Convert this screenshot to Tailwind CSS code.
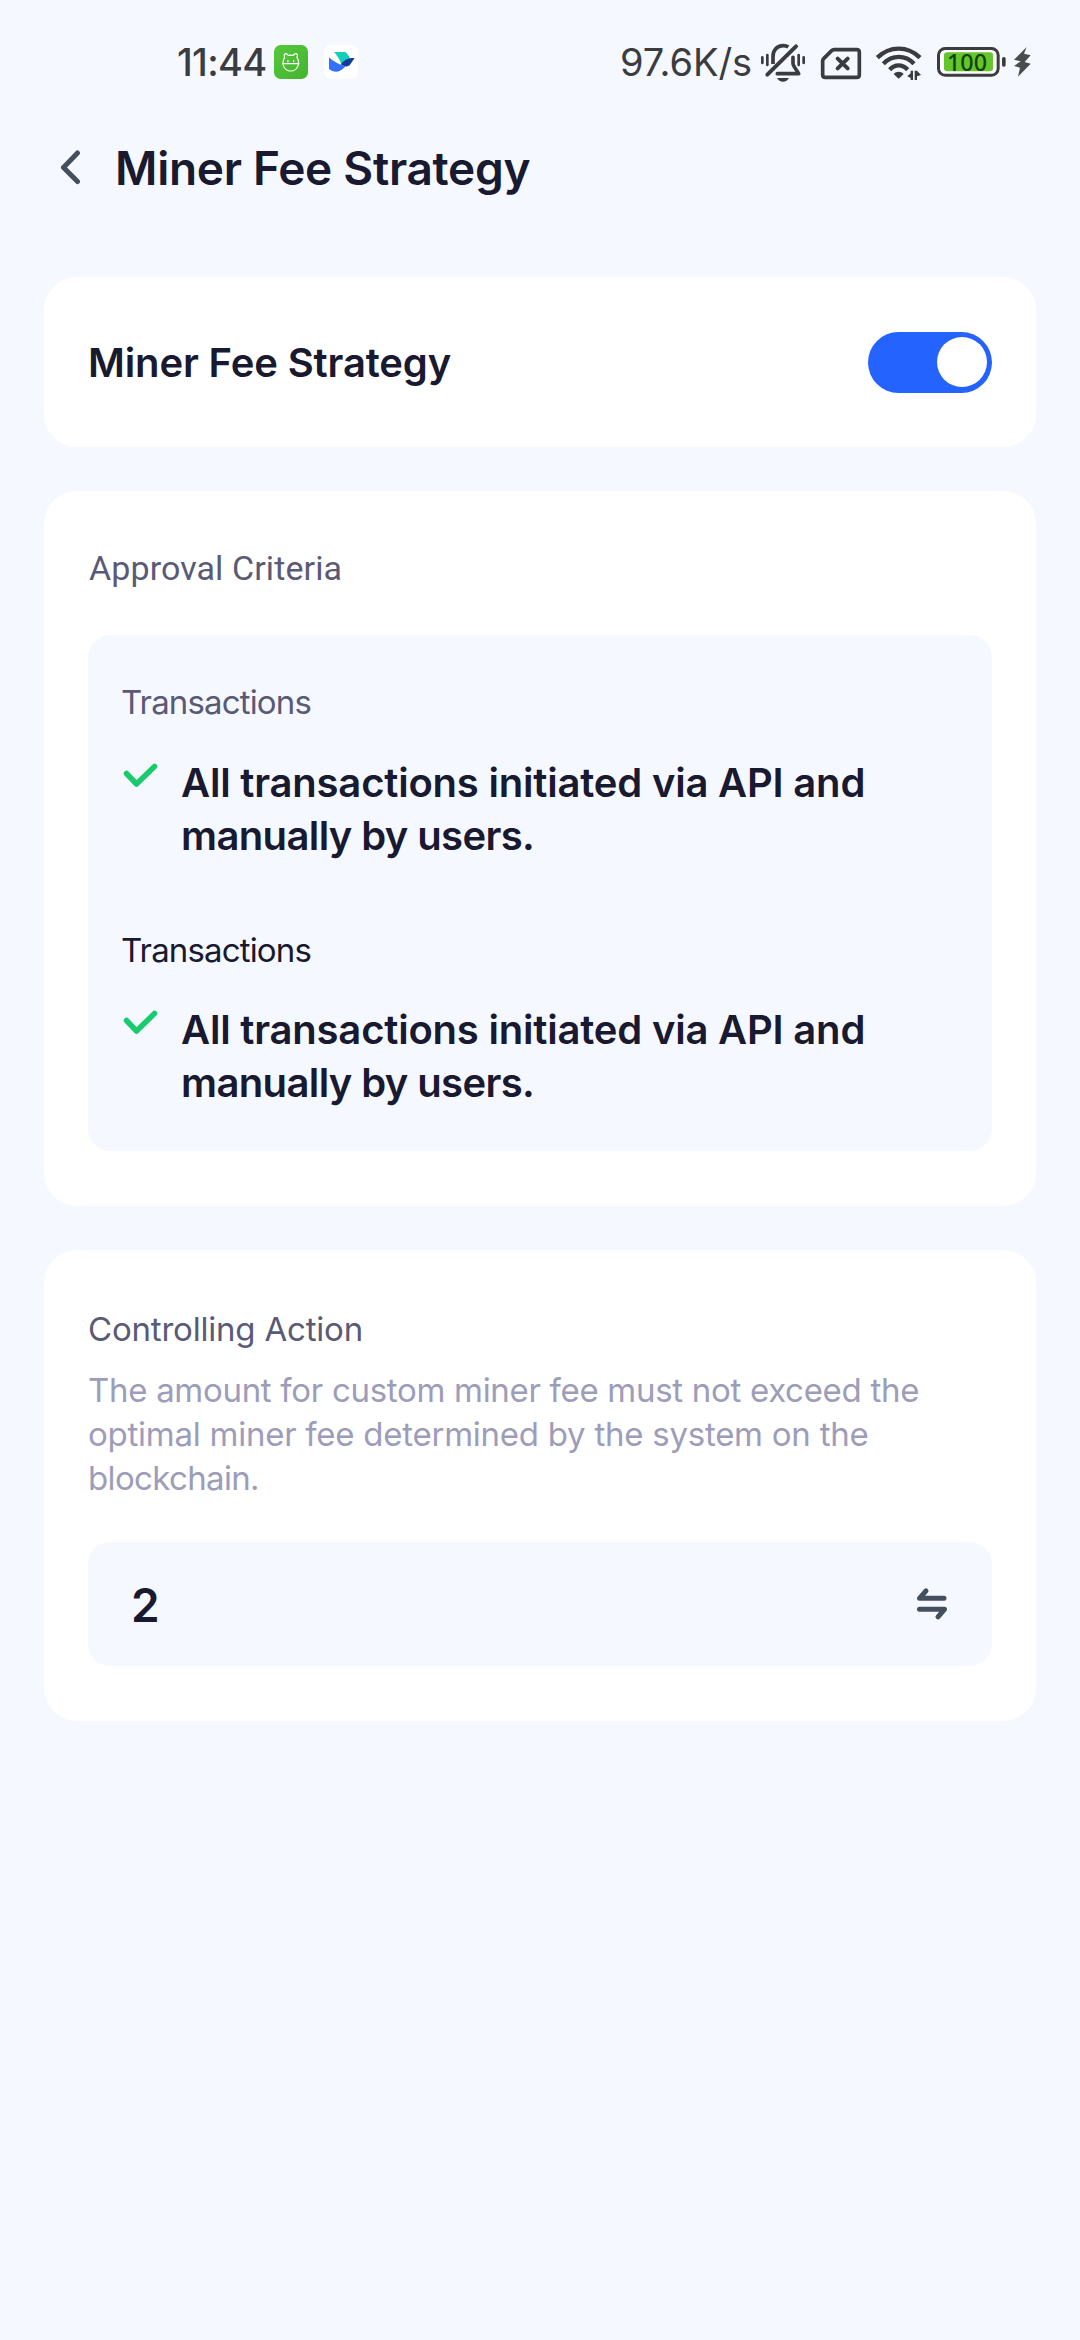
<!DOCTYPE html>
<html lang="en">
<head>
<meta charset="utf-8">
<meta name="viewport" content="width=device-width, initial-scale=1">
<title>Miner Fee Strategy</title>
<script src="https://cdn.jsdelivr.net/npm/@tailwindcss/browser@4"></script>
</head>
<body class="h-[2340px] w-[1080px] overflow-hidden bg-[#f5f8ff] font-['Inter',sans-serif] text-[#19192f]">

<!-- Status bar -->
<div class="flex h-[124px] items-center text-[38px] leading-10 whitespace-nowrap text-[#3b3c3f]">
  <div class="ml-[177px] w-[97px] font-medium tracking-[-0.700px]">11:44</div>
  <svg class="h-[34px] w-[34px]" viewBox="342 45 102 102" fill="none">
    <defs><linearGradient id="g" x1="0" y1="0" x2="1" y2="1"><stop stop-color="#54c93d"/><stop offset="1" stop-color="#45b32d"/></linearGradient></defs>
    <rect x="342" y="45" width="102" height="102" rx="20" fill="url(#g)"/>
    <g stroke="#fff" stroke-width="3.500" stroke-linecap="round" stroke-linejoin="round">
      <path d="M374 82c-3-5-1-12 5-11 4 1 3 5 7 5 4-1 9-1 13 0 3 0 3-4 7-5 6-1 8 6 5 11"/>
      <path d="M374 82c-9 14-6 41 18 41s28-27 19-41"/>
      <path d="M368 101h49"/>
      <path d="M384 91v4M401 91v4"/>
    </g>
  </svg>
  <svg class="ml-4 h-[34px] w-[34px]" viewBox="492 45 102 102">
    <rect x="492" y="45" width="102" height="102" rx="20" fill="#fff"/>
    <path d="M522 66h34c7 6 12 14 14 20-9 2-17 9-25 18-6-15-13-27-23-38Z" fill="#12cfb8"/>
    <path d="M507 82c15 14 33 24 50 26-8 10-17 17-28 17-9 0-16-3-22-8Z" fill="#3370ff"/>
    <path d="M584 85c-18-4-30 3-42 18 8 5 15 7 21 6 9-2 12-15 21-24Z" fill="#123c9c"/>
  </svg>
  <div class="ml-[262px] w-[140px] tracking-[-0.050px]">97.6K/s</div>
  <svg class="h-10 w-[47px]" viewBox="450 36 141 120" fill="none" stroke="#3b3c3f" stroke-linecap="round" stroke-linejoin="round">
    <path d="M472 134 558 49" stroke-width="12"/>
    <path d="M489 102V80c0-19 12-33 30-33 6 0 12 1 16 4" stroke-width="11" stroke-linecap="butt"/>
    <path d="M549 82v18c0 10 12 20 17 31h-64" stroke-width="11"/>
    <path d="M501 144h36c-4 7-10 11-18 11s-14-4-18-11Z" fill="#3b3c3f" stroke="none"/>
    <path d="M457 82v17M472 75v30M566 75v30M581 82v17" stroke-width="8"/>
  </svg>
  <svg class="ml-[13px] h-10 w-[42px]" viewBox="30 36 126 120" fill="none" stroke="#3b3c3f" stroke-linecap="round" stroke-linejoin="round">
    <path d="M72 59h68q8 0 8 8v67q0 8-8 8H46q-8 0-8-8V93q0-4 3-7l24-24q3-3 7-3Z" stroke-width="11"/>
    <path d="m83 86 30 29M113 86l-30 29" stroke-width="12"/>
  </svg>
  <svg class="ml-[13px] h-10 w-[47px]" viewBox="195 36 141 120" fill="none" stroke="#3b3c3f" stroke-width="13">
    <path d="M202 83c37-36 91-36 128 0M220 101c27-27 66-27 92 0M239 119c16-17 38-17 54 0"/>
    <path d="M251 132c8-9 22-9 30 0l-13 13q-2 2-4 0Z" fill="#3b3c3f" stroke="none"/>
    <path d="M292 139l10-9v-8h7v28h-7v-6ZM314 150v-28h7l12 13-12 4v11Z" fill="#3b3c3f" stroke="none"/>
  </svg>
  <svg class="ml-[14px] h-10 w-[71px]" viewBox="378 36 213 120" fill="none">
    <rect x="385.500" y="55.500" width="179" height="80" rx="20" fill="#fff" stroke="#3b3c3f" stroke-width="9"/>
    <rect x="402" y="67" width="147" height="57" rx="9" fill="#64c52c"/>
    <rect x="576" y="81" width="11" height="29" rx="5" fill="#3b3c3f"/>
    <text x="411" y="123" font-family="Noto Sans, sans-serif" font-size="71" font-weight="500" textLength="120" lengthAdjust="spacingAndGlyphs" fill="#164209">100</text>
  </svg>
  <svg class="ml-[6px] h-10 w-[19px]" viewBox="609 36 57 120">
    <path d="m650 51-38 38 20 5-20 14 18 5-6 27 38-39-18-5 18-20-20-5Z" fill="#4b4c4f"/>
  </svg>
</div>

<!-- Header -->
<header class="flex h-[89px] items-center">
  <svg class="ml-[58px] h-[38px] w-6" viewBox="0 0 24 38" fill="none" stroke="#444f5d" stroke-width="5" stroke-linecap="round" stroke-linejoin="round"><path d="M19.500 3 5.500 17.500l14 14"/></svg>
  <h1 class="-mt-px ml-[33px] text-[46px] leading-[56px] font-semibold tracking-[-0.290px]">Miner Fee Strategy</h1>
</header>

<main class="mx-11 mt-16 flex flex-col gap-11">
  <section class="flex h-[170px] items-center justify-between rounded-[33px] bg-white px-11">
    <h2 class="pt-0.5 text-[40px] leading-[52px] font-semibold tracking-[-0.140px]">Miner Fee Strategy</h2>
    <div class="flex h-[61px] w-[124px] items-center justify-end rounded-full bg-[#2563ff] pr-[5.500px]">
      <div class="size-[50px] rounded-full bg-white"></div>
    </div>
  </section>

  <section class="h-[715px] rounded-[33px] bg-white px-11 pt-[55px]">
    <h3 class="font-['Roboto',sans-serif] text-[34px] leading-[44px] tracking-[0.100px] text-[#5a5a76]"><span class="ml-px">Approval Criteria</span></h3>
    <div class="mt-[45px] h-[516px] rounded-[22px] bg-[#f5f8ff] px-[33px] pt-[45px]">
      <p class="text-[33px] leading-[44px] tracking-[-0.850px] text-[#5a5a76]">Transactions</p>
      <div class="mt-8 flex">
        <svg class="mt-[5px] ml-[2px] h-8 w-9" viewBox="0 0 36 32" fill="none" stroke="#19cb6d" stroke-width="5.500" stroke-linecap="round" stroke-linejoin="round"><path d="M3.500 12.500 13.500 23 31.500 5.500"/></svg>
        <p class="mt-px ml-[22px] text-[40px] leading-[52.800px] font-semibold tracking-[-0.200px]">All transactions initiated via API and<br><span class="tracking-[-0.620px]">manually by users.</span></p>
      </div>
      <p class="mt-[65.400px] text-[33px] leading-[44px] tracking-[-0.850px]">Transactions</p>
      <div class="mt-[31px] flex">
        <svg class="mt-[5px] ml-[2px] h-8 w-9" viewBox="0 0 36 32" fill="none" stroke="#19cb6d" stroke-width="5.500" stroke-linecap="round" stroke-linejoin="round"><path d="M3.500 12.500 13.500 23 31.500 5.500"/></svg>
        <p class="mt-px ml-[22px] text-[40px] leading-[52.800px] font-semibold tracking-[-0.200px]">All transactions initiated via API and<br><span class="tracking-[-0.620px]">manually by users.</span></p>
      </div>
    </div>
  </section>

  <section class="h-[471px] rounded-[33px] bg-white px-11 pt-[57px]">
    <h3 class="text-[33px] leading-[44px] tracking-[-0.200px] text-[#5a5a76]">Controlling Action</h3>
    <p class="mt-[17px] text-[33px] leading-[44px] tracking-[-0.300px] whitespace-nowrap text-[#9d9db9]">The amount for custom miner fee must not exceed the<br><span class="tracking-[-0.250px]">optimal miner fee determined by the system on the</span><br><span class="tracking-[-0.650px]">blockchain.</span></p>
    <div class="mt-[42px] flex h-[124px] items-center justify-between rounded-[22px] bg-[#f5f8ff] pr-[43px] pl-[43px]">
      <span class="pt-0.5 text-[46px] leading-[56px] font-semibold">2</span>
      <svg class="h-9 w-9" viewBox="0 0 36 36" fill="none" stroke="#444f5d" stroke-width="5" stroke-linecap="round" stroke-linejoin="round"><path d="M31 12.300H6.500L13 4.800M6.500 23.300h25L25 30.800"/></svg>
    </div>
  </section>
</main>
</body>
</html>
